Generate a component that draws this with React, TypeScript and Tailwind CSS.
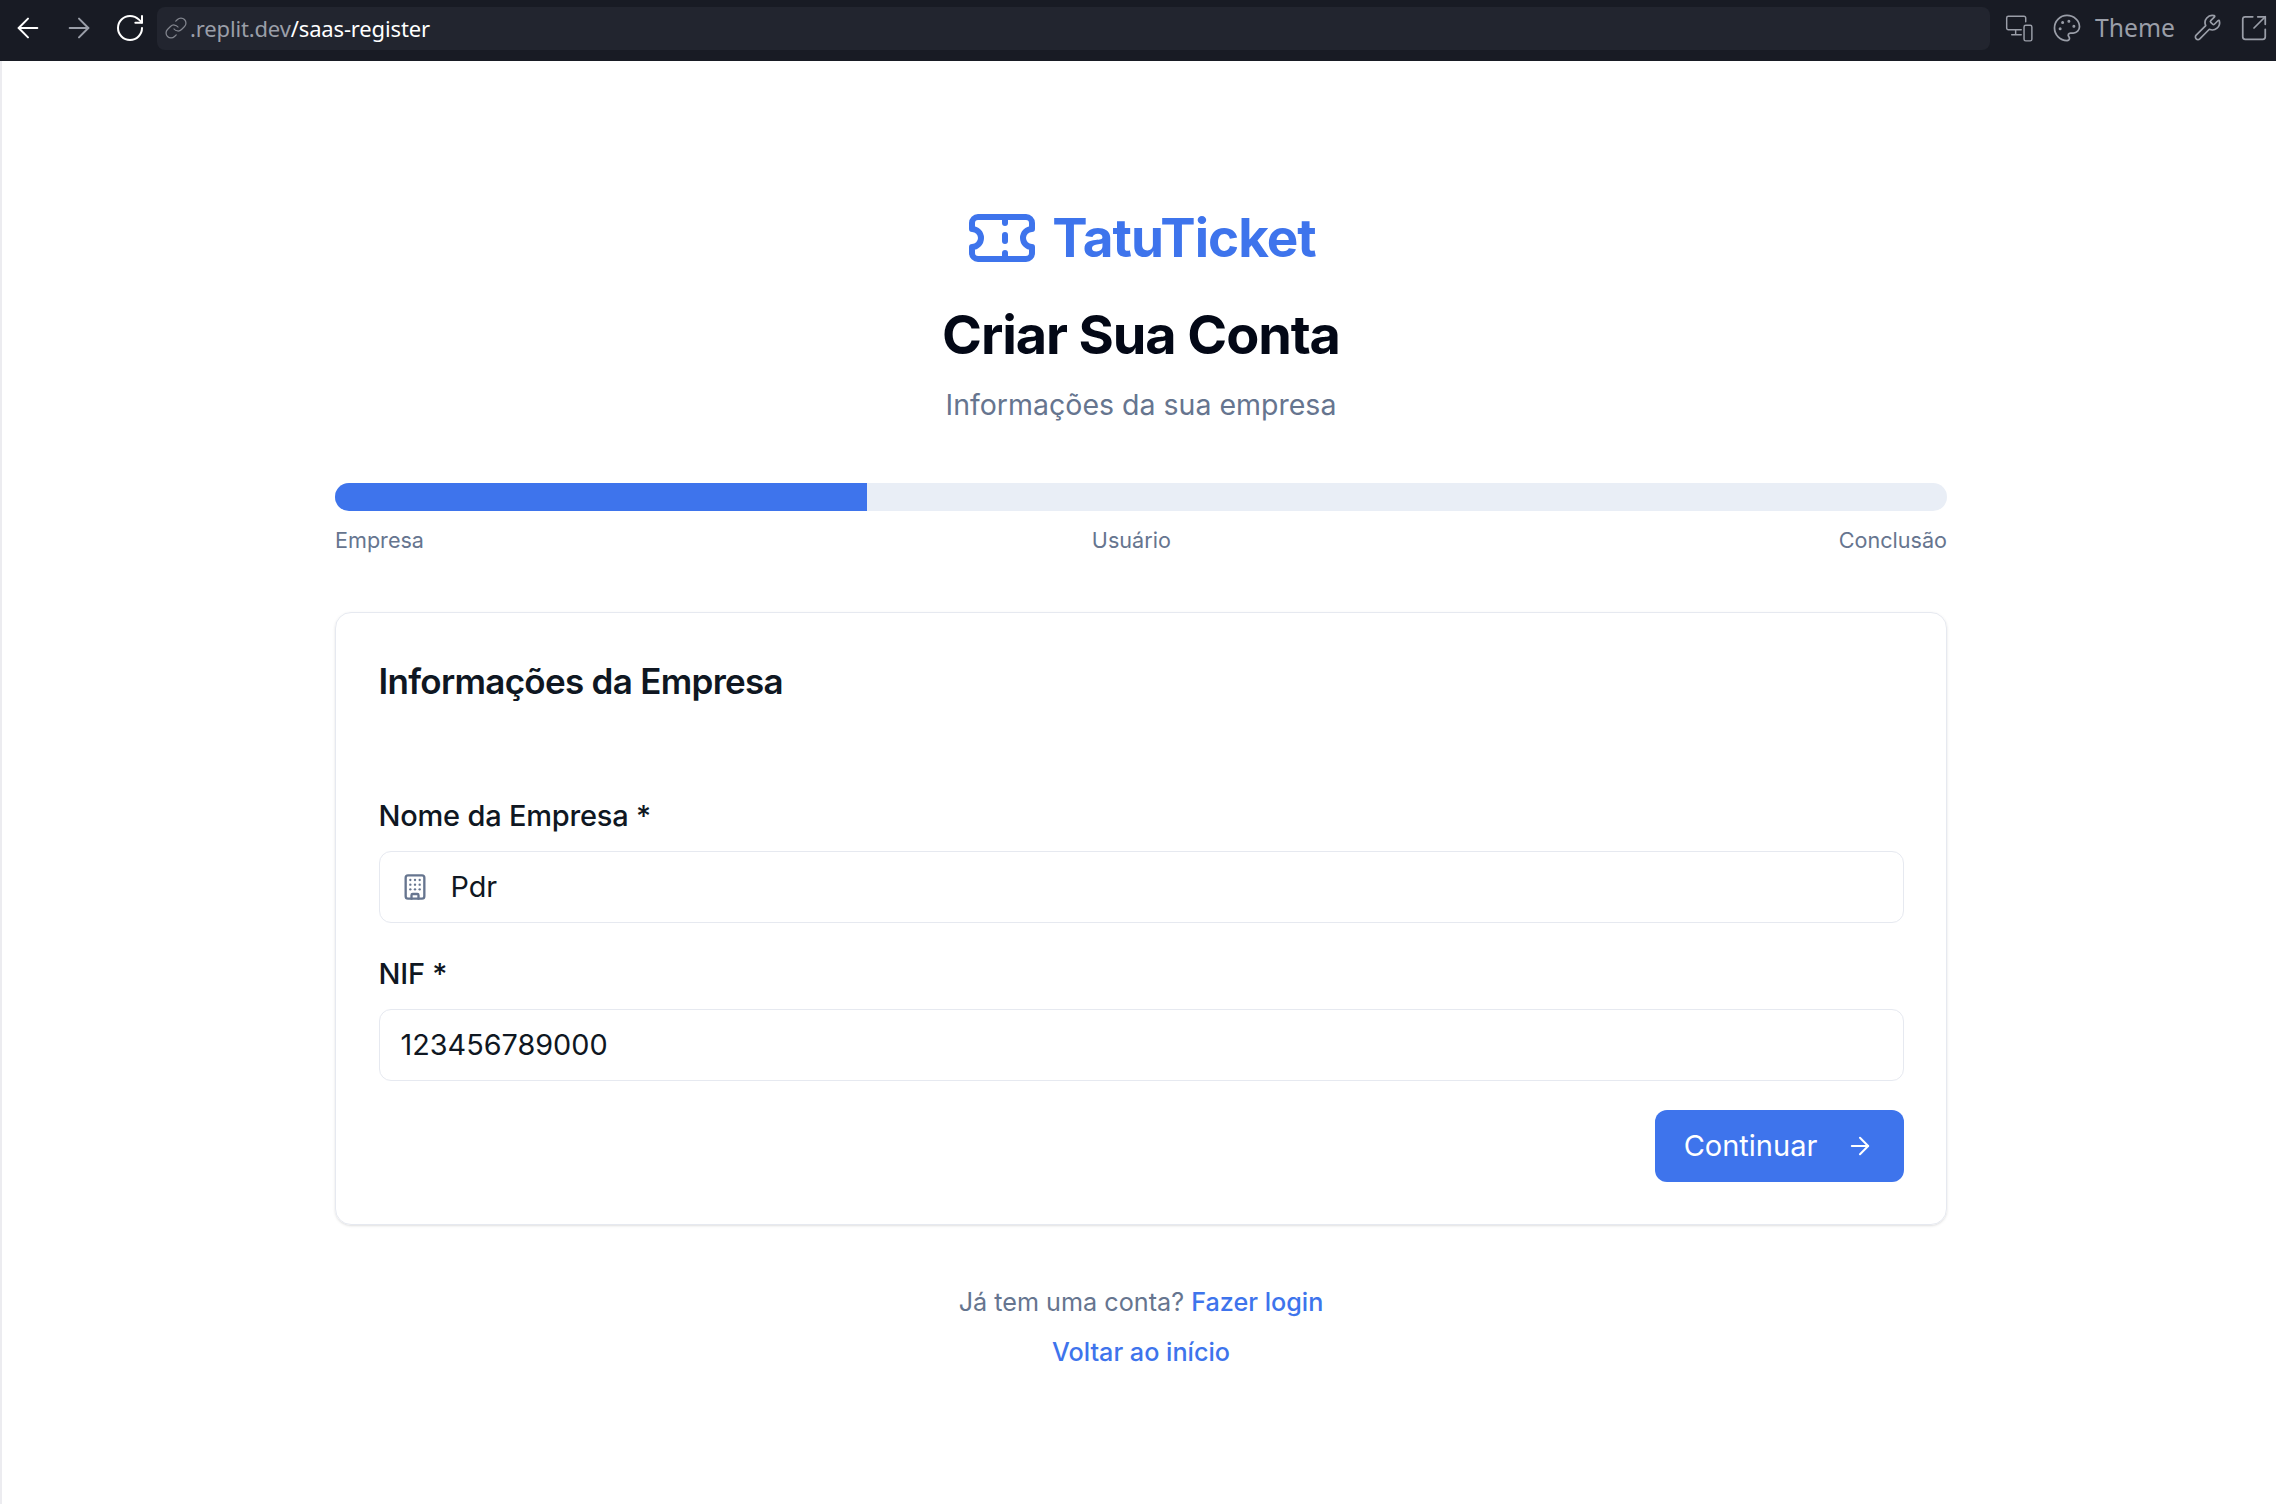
import { ArrowLeft, ArrowRight, RotateCw, Link, Palette, Wrench, SquareArrowOutUpRight, Building, Ticket } from 'lucide-react'

function DevicesIcon() {
  return (
    <svg width="30" height="28" viewBox="0 0 26 25" fill="none" stroke="currentColor" strokeWidth="1.3" strokeLinecap="round" strokeLinejoin="round">
      <path d="M19 7V3.500A1.500 1.500 0 0 0 17.500 2h-14A1.500 1.500 0 0 0 2 3.500v9A1.500 1.500 0 0 0 3.500 14H15" />
      <path d="M10 14v4M6.500 18.500H15" />
      <rect x="17.500" y="10" width="7" height="14" rx="1.500" />
    </svg>
  )
}

function Field({ label, children }: { label: string; children: React.ReactNode }) {
  return (
    <div>
      <label className="block text-[29px] leading-[44px] font-medium tracking-[-0.2px] text-[#0f1722]">{label}</label>
      <div className="mt-[13px] flex h-[72px] items-center rounded-[12px] border-[1.5px] border-[#e6e9f0] px-[21px] text-[28.8px] text-[#0f1722]">
        {children}
      </div>
    </div>
  )
}

export default function App() {
  return (
    <div className="flex min-h-[1504px] flex-col bg-white font-['Inter',sans-serif]">
      {/* browser chrome */}
      <div className="flex h-[61px] items-center bg-[#181b24] pb-[5px] pl-[12px] pr-[7px] text-[#9a9ea8]">
        <ArrowLeft size={32} strokeWidth={1.5} className="text-white" />
        <ArrowRight size={32} strokeWidth={1.5} className="ml-[19px] text-[#9a9ea8]" />
        <RotateCw size={32} strokeWidth={1.5} className="ml-[19px] text-white" />
        <div className="ml-[11px] flex h-[43px] flex-1 items-center rounded-[8px] bg-[#22252f] pl-[7px] font-['Noto_Sans',sans-serif] text-[22px] tracking-[-0.15px]">
          <Link size={24} strokeWidth={1.25} className="text-[#83868f]" />
          <span className="ml-[2px] text-[#9a9ea8]">.replit.dev</span>
          <span className="text-white">/saas-register</span>
        </div>
        <div className="ml-[14px] flex items-center">
          <DevicesIcon />
          <Palette size={30} strokeWidth={1.4} className="ml-[18px]" />
          <span className="ml-[13px] font-['Noto_Sans',sans-serif] text-[24.7px]">Theme</span>
          <Wrench size={29} strokeWidth={1.4} className="ml-[18px]" />
          <SquareArrowOutUpRight size={30} strokeWidth={1.4} className="ml-[17px]" />
        </div>
      </div>

      {/* page */}
      <div className="flex flex-1 justify-center border-l-2 border-[#ececf0] pl-[4px]">
        <div className="w-[1612px]">
          <div className="mt-[141px] flex items-center justify-center gap-[14px]">
            <Ticket size={72} strokeWidth={2} className="text-[#3e74ec]" />
            <span className="text-[53px] leading-[64px] font-bold tracking-[-1px] text-[#3e74ec]">TatuTicket</span>
          </div>
          <h1 className="mt-[28px] text-center text-[54px] leading-[66px] font-bold tracking-[-1.1px] text-[#030816]">Criar Sua Conta</h1>
          <p className="mt-[15px] text-center text-[28.5px] leading-[44px] text-[#66758f]">Informações da sua empresa</p>

          <div className="mt-[56px] h-[28px] overflow-hidden rounded-full bg-[#e9eef6]">
            <div className="h-full w-[33%] bg-[#3e74ec]" />
          </div>
          <div className="mt-[13px] flex justify-between text-[21.6px] leading-[32px] text-[#66758f]">
            <span>Empresa</span>
            <span>Usuário</span>
            <span>Conclusão</span>
          </div>

          <div className="mt-[56px] h-[613px] rounded-[16px] border-[1.5px] border-[#e6e9f0] px-[42.5px] pt-[42px] shadow-sm">
            <h2 className="text-[35px] leading-[52px] font-semibold tracking-[-0.7px] text-[#0f1722]">Informações da Empresa</h2>
            <div className="mt-[87px]">
              <Field label="Nome da Empresa *">
                <Building size={28} strokeWidth={2} className="text-[#66758f]" />
                <span className="ml-[22px]">Pdr</span>
              </Field>
            </div>
            <div className="mt-[29px]">
              <Field label="NIF *">
                <span>123456789000</span>
              </Field>
            </div>
            <div className="mt-[29px] flex justify-end">
              <button className="flex h-[72px] w-[249px] items-center justify-center gap-[29px] rounded-[12px] bg-[#3e74ec] text-[29px] text-white">
                Continuar
                <ArrowRight size={28} strokeWidth={1.75} />
              </button>
            </div>
          </div>

          <p className="mt-[57px] text-center text-[25.2px] leading-[40px] text-[#66758f]">
            Já tem uma conta? <a className="font-medium text-[#3e74ec]">Fazer login</a>
          </p>
          <p className="mt-[10px] text-center text-[25.2px] leading-[40px] font-medium text-[#3e74ec]">
            <a>Voltar ao início</a>
          </p>
        </div>
      </div>
    </div>
  )
}
